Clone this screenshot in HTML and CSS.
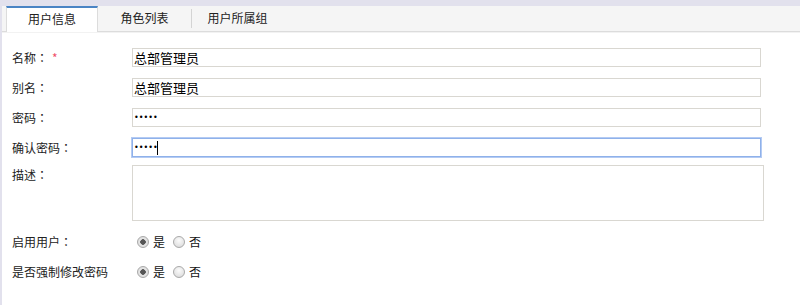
FILE: index.html
```html
<!DOCTYPE html>
<html lang="zh">
<head>
<meta charset="utf-8">
<title>用户信息</title>
<link rel="stylesheet" href="styles.css">
</head>
<body>
<div class="page">
  <div class="tabs">
    <div class="tab tab-active">用户信息</div>
    <div class="tab">角色列表</div>
    <div class="tab tab-sep">用户所属组</div>
  </div>
  <form class="form">
    <label class="lbl">名称<span class="colon" lang="zh-Hant">：</span><span class="req">*</span></label>
    <input class="field" type="text" value="总部管理员">
    <label class="lbl">别名<span class="colon" lang="zh-Hant">：</span></label>
    <input class="field" type="text" value="总部管理员">
    <label class="lbl">密码<span class="colon" lang="zh-Hant">：</span></label>
    <input class="field pwd" type="password" value="12345">
    <label class="lbl">确认密码<span class="colon" lang="zh-Hant">：</span></label>
    <div class="focus-wrap">
      <input class="field pwd field-focus" type="password" value="12345">
      <span class="caret"></span>
    </div>
    <label class="lbl lbl-top">描述<span class="colon" lang="zh-Hant">：</span></label>
    <textarea class="area"></textarea>
    <label class="lbl">启用用户<span class="colon" lang="zh-Hant">：</span></label>
    <div class="radios">
      <label class="opt"><input class="radio" type="radio" name="enable" checked>是</label>
      <label class="opt"><input class="radio" type="radio" name="enable">否</label>
    </div>
    <label class="lbl">是否强制修改密码</label>
    <div class="radios">
      <label class="opt"><input class="radio" type="radio" name="force" checked>是</label>
      <label class="opt"><input class="radio" type="radio" name="force">否</label>
    </div>
  </form>
</div>
</body>
</html>
```
FILE: styles.css
```css
html, body {
  margin: 0;
  padding: 0;
}
body {
  background: #e2e1ed;
  font-family: "Noto Sans CJK SC", "Noto Sans", sans-serif;
  font-size: 12px;
  color: #222;
}
.page {
  margin: 6px 0 0 2px;
  background: #fff;
  height: 299px;
}
.tabs {
  display: flex;
  height: 25px;
  background: #f5f5f5;
  border-bottom: 1px solid #dcdcdc;
  box-shadow: 0 1px 0 #f2f2f2;
  padding-left: 4px;
}
.tab {
  width: 93px;
  height: 25px;
  line-height: 24px;
  text-align: center;
  color: #222;
  box-sizing: border-box;
  position: relative;
}
.tab-active {
  width: 92px;
  background: #fff;
  border-top: 2px solid #4a84c4;
  border-left: 1px solid #dcdcdc;
  border-right: 1px solid #dcdcdc;
  height: 26px;
  line-height: 21px;
}
.tab-sep::before {
  content: "";
  position: absolute;
  left: 0;
  top: 3px;
  height: 19px;
  width: 1px;
  background: #d4d4d4;
}
.form {
  display: grid;
  grid-template-columns: 120px 629px;
  row-gap: 11px;
  padding: 16px 0 0 10px;
  align-items: center;
}
.lbl {
  color: #222;
  line-height: 19px;
  white-space: nowrap;
}
.colon {
  display: inline-block;
  width: 12px;
  text-align: center;
  font-family: "Noto Sans CJK TC", sans-serif;
}
.lbl-top {
  align-self: start;
  margin-top: -3px;
}
.req {
  color: #ef4f6a;
  margin-left: 4px;
}
.field {
  width: 100%;
  height: 19px;
  box-sizing: border-box;
  border: 1px solid #d9d7d1;
  padding: 0 1px;
  margin: 0;
  font-family: "Noto Sans CJK SC", "Noto Sans", sans-serif;
  font-size: 13px;
  color: #000;
  outline: none;
  background: #fff;
  display: block;
}
.pwd {
  font-family: "DejaVu Sans", sans-serif;
  font-size: 8px;
}
.focus-wrap {
  position: relative;
}
.field-focus {
  border-color: #8fb1ea;
  box-shadow: 0 0 0 1px #b4cbf3;
}
.caret {
  position: absolute;
  left: 25px;
  top: 3px;
  width: 1px;
  height: 14px;
  background: #000;
}
.area {
  width: 632px;
  height: 56px;
  box-sizing: border-box;
  border: 1px solid #d9d7d1;
  margin: -3px 0 0 0;
  padding: 1px;
  resize: none;
  outline: none;
  font-family: "Noto Sans CJK SC", sans-serif;
}
.radios {
  display: flex;
  align-items: center;
  gap: 8px;
  height: 19px;
  padding-left: 5px;
}
.opt {
  display: flex;
  align-items: center;
  gap: 4px;
  font-size: 12px;
  color: #111;
}
.radio {
  appearance: none;
  -webkit-appearance: none;
  width: 12px;
  height: 12px;
  margin: 0;
  border-radius: 50%;
  border: 1px solid #a9a9a9;
  background: radial-gradient(circle at 50% 35%, #fbfbfb 0%, #e2e2e2 70%, #d0d0d0 100%);
  box-sizing: border-box;
}
.radio:checked {
  background: radial-gradient(circle, #555 0, #555 2.5px, #e6e6e6 3px, #d6d6d6 100%);
}
```
